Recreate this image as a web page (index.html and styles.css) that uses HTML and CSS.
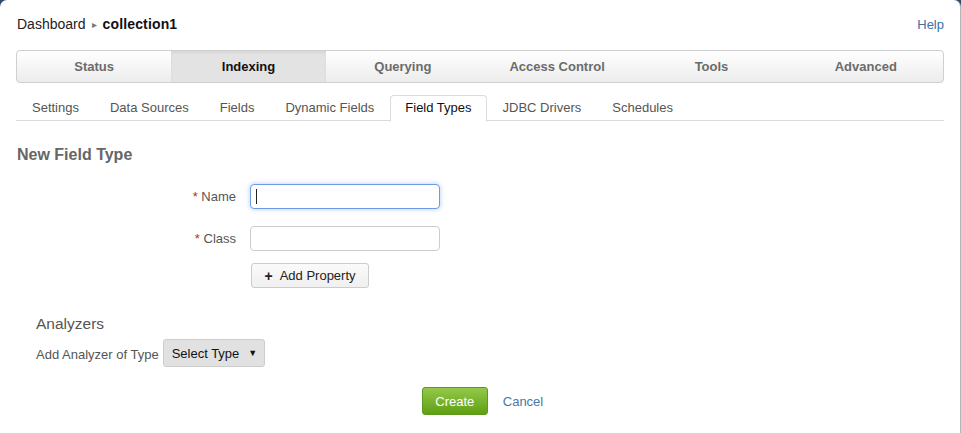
FILE: index.html
```html
<!DOCTYPE html>
<html>
<head>
<meta charset="utf-8">
<link rel="stylesheet" href="styles.css">
</head>
<body>
<div class="window">
  <div class="topbar">
    <div class="crumbs">
      <span class="crumb">Dashboard</span>
      <span class="crumb-arrow">&#9656;</span>
      <span class="crumb-current">collection1</span>
    </div>
    <a class="help">Help</a>
  </div>

  <nav class="mainnav">
    <a class="mainnav-item">Status</a>
    <a class="mainnav-item active">Indexing</a>
    <a class="mainnav-item">Querying</a>
    <a class="mainnav-item">Access Control</a>
    <a class="mainnav-item">Tools</a>
    <a class="mainnav-item">Advanced</a>
  </nav>

  <ul class="subtabs">
    <li class="subtab">Settings</li>
    <li class="subtab">Data Sources</li>
    <li class="subtab">Fields</li>
    <li class="subtab">Dynamic Fields</li>
    <li class="subtab active">Field Types</li>
    <li class="subtab">JDBC Drivers</li>
    <li class="subtab">Schedules</li>
  </ul>

  <h2 class="section-title">New Field Type</h2>

  <div class="form">
    <label class="form-label"><span class="req">*</span> Name</label>
    <div class="form-field"><input class="text-input focused" type="text"><span class="caret"></span></div>

    <label class="form-label"><span class="req">*</span> Class</label>
    <div class="form-field"><input class="text-input" type="text"></div>

    <div></div>
    <div class="form-field"><button class="btn-light"><span class="plus">+</span>Add Property</button></div>
  </div>

  <div class="analyzers">
    <h3 class="analyzers-title">Analyzers</h3>
    <div class="analyzer-row">
      <span class="analyzer-label">Add Analyzer of Type</span>
      <button class="select-btn">Select Type<span class="select-arrow">&#9660;</span></button>
    </div>
  </div>

  <div class="actions">
    <button class="btn-create">Create</button>
    <a class="cancel">Cancel</a>
  </div>
</div>
</body>
</html>
```

FILE: styles.css
```css
* { box-sizing: border-box; }

html, body {
  margin: 0;
  padding: 0;
  background: #2f4b6b;
  height: 100%;
}

body {
  font-family: "Liberation Sans", Arial, sans-serif;
  color: #333;
}

.window {
  background: #fff;
  width: 961px;
  height: 433px;
  border-radius: 7px 7px 0 0;
  border-right: 1px solid #b5b5b5;
  padding: 16px 16px 0 16px;
}

.topbar {
  display: flex;
  justify-content: space-between;
  align-items: center;
  height: 17px;
}

.crumbs {
  display: flex;
  align-items: center;
  font-size: 14px;
  line-height: 17px;
  padding-left: 1px;
}

.crumb { color: #222; }

.crumb-arrow {
  font-size: 10px;
  color: #777;
  margin: 0 6px 0 6px;
}

.crumb-current {
  font-weight: bold;
  color: #111;
  letter-spacing: 0.15px;
}

.help {
  font-size: 13px;
  color: #3d6ea6;
}

.mainnav {
  display: flex;
  margin-top: 17px;
  height: 33px;
  border: 1px solid #cfcfcf;
  border-radius: 4px;
  background: linear-gradient(#ffffff, #ececec);
  overflow: hidden;
}

.mainnav-item {
  flex: 1;
  display: flex;
  align-items: center;
  justify-content: center;
  font-size: 13px;
  font-weight: bold;
  color: #6b6b6b;
}

.mainnav-item.active {
  background: #e3e3e3;
  color: #111;
  box-shadow: inset 0 2px 3px rgba(0,0,0,0.06);
}

.subtabs {
  display: flex;
  list-style: none;
  margin: 12px 0 0 0;
  padding: 0;
  border-bottom: 1px solid #dcdcdc;
  height: 26px;
}

.subtab {
  padding: 0 14.5px;
  height: 26px;
  line-height: 24px;
  font-size: 13px;
  color: #555;
  border: 1px solid transparent;
  border-radius: 4px 4px 0 0;
}

.subtab:first-child { padding-left: 15px; }

.subtab.active {
  border-color: #dcdcdc;
  border-bottom-color: #fff;
  background: #fff;
  color: #111;
  margin-bottom: -1px;
  height: 27px;
}

.section-title {
  margin: 25px 0 0 1px;
  font-size: 16px;
  line-height: 18px;
  font-weight: bold;
  color: #666;
}

.form {
  display: grid;
  grid-template-columns: 220px 190px;
  column-gap: 14px;
  margin-top: 20px;
  align-items: center;
}

.form-label {
  text-align: right;
  font-size: 13px;
  color: #555;
}

.req { color: #b03030; }

.form-field { position: relative; }

.text-input {
  display: block;
  width: 190px;
  height: 25px;
  border: 1px solid #cccccc;
  border-radius: 4px;
  padding: 0 6px;
  font-family: inherit;
  font-size: 13px;
  outline: none;
  background: #fff;
}

.text-input.focused {
  border-color: #6d9be6;
  box-shadow: 0 0 5px rgba(82, 140, 236, 0.45);
}

.caret {
  position: absolute;
  left: 6px;
  top: 5px;
  width: 1px;
  height: 15px;
  background: #222;
}

.form > .form-label:nth-child(3),
.form > .form-field:nth-child(4) {
  margin-top: 17px;
}

.form > .form-field:nth-child(6) {
  margin-top: 12px;
}

.btn-light {
  margin-left: 1px;
  width: 118px;
  height: 25px;
  border: 1px solid #cccccc;
  border-radius: 3px;
  background: linear-gradient(#fafafa, #f0f0f0);
  font-family: inherit;
  font-size: 13px;
  color: #222;
  padding: 0;
  display: flex;
  align-items: center;
  justify-content: center;
}

.plus {
  font-weight: bold;
  margin-right: 7px;
  font-size: 14px;
}

.analyzers {
  padding-left: 20px;
  margin-top: 26px;
}

.analyzers-title {
  margin: 0;
  font-size: 15.5px;
  line-height: 20px;
  font-weight: normal;
  color: #555;
}

.analyzer-row {
  display: flex;
  align-items: center;
  margin-top: 5px;
}

.analyzer-label {
  font-size: 13px;
  color: #555;
  margin-right: 4px;
  padding-top: 3px;
}

.select-btn {
  width: 102px;
  height: 28px;
  border: 1px solid #cdcdcd;
  border-radius: 3px;
  background: #e1e1e1;
  font-family: inherit;
  font-size: 13px;
  color: #111;
  padding: 0 0 0 8px;
  display: flex;
  align-items: center;
}

.select-arrow {
  font-size: 9px;
  margin-left: 9px;
}

.actions {
  display: flex;
  justify-content: center;
  align-items: center;
  gap: 15px;
  margin-top: 20px;
  padding-left: 5px;
}

.btn-create {
  width: 66px;
  height: 28px;
  border: 1px solid #5a9a1e;
  border-radius: 3px;
  background: linear-gradient(#94c94a, #5f9f12);
  color: #fff;
  font-family: inherit;
  font-size: 13px;
  padding: 0;
}

.cancel {
  font-size: 13px;
  color: #4a76a8;
}
```
